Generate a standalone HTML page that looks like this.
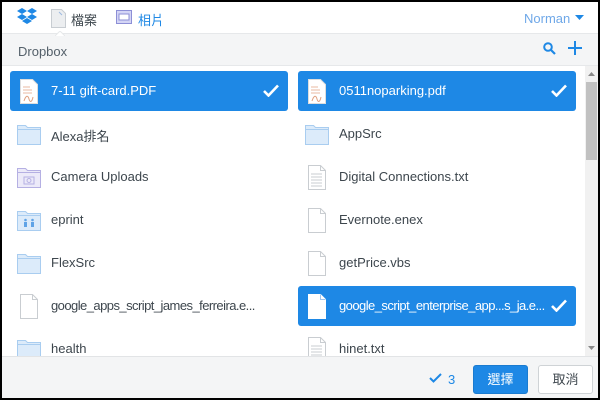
<!DOCTYPE html>
<html><head><meta charset="utf-8"><style>
*{margin:0;padding:0;box-sizing:border-box}
body{width:600px;height:400px;background:#000;overflow:hidden;font-family:"Liberation Sans","Noto Sans CJK TC",sans-serif;font-size:13px;color:#3d464d}
#w{position:absolute;left:2px;top:2px;width:596px;height:396px;background:#fff;overflow:hidden}
.a{position:absolute}
.row{position:absolute;height:40px;width:278px;border-radius:3px}
.row.sel{background:#1e88e5;color:#fff}
.row .t{position:absolute;left:41px;top:12px;white-space:nowrap}
.row .ic{position:absolute;left:7px;top:8px}
.chk{position:absolute;right:9px;top:13px}
.n{letter-spacing:-0.55px}
</style></head><body><div id="w">
<!-- top bar -->
<svg class="a" style="left:14px;top:5px" width="22" height="19" viewBox="0 0 22 19"><g fill="#1e88e5"><path d="M6 1l5 3-5 3-5-3z"/><path d="M16 1l5 3-5 3-5-3z"/><path d="M1 10l5-3 5 3-5 3z"/><path d="M11 10l5-3 5 3-5 3z"/><path d="M6 14l5-3 5 3-5 3z"/></g></svg>
<svg class="a" style="left:49px;top:7px" width="15" height="19"><path d="M.5 .5h10l4 4v14H.5z" fill="#eceef0" stroke="#c8cdd2"/><path d="M8 3l3 3" stroke="#9db9e0"/></svg>
<div class="a" style="left:69px;top:8px;font-size:13px;color:#3d464d">檔案</div>
<svg class="a" style="left:114px;top:8px" width="16" height="14"><rect x=".5" y=".5" width="15" height="13" fill="#d4d5f5" stroke="#8d8fd6"/><rect x="3" y="4" width="10" height="6" fill="#fff" stroke="#8d8fd6"/></svg>
<div class="a" style="left:136px;top:8px;color:#1e88e5">相片</div>
<div class="a" style="left:522px;top:9px;color:#6fa8e8">Norman</div>
<svg class="a" style="left:573px;top:13px" width="9" height="6"><path d="M0 0h9L4.5 5z" fill="#1e88e5"/></svg>
<!-- header -->
<div class="a" style="left:0;top:31px;width:596px;height:33px;background:#f4f5f6;border-top:1px solid #e6e8ea;border-bottom:1px solid #e6e8ea"></div>
<svg class="a" style="left:53px;top:29px" width="10" height="5"><path d="M0 5l5-5 5 5" fill="#fff" stroke="#e6e8ea"/></svg>
<div class="a" style="left:16px;top:42px;color:#54606a">Dropbox</div>
<svg class="a" style="left:541px;top:40px" width="13" height="13"><circle cx="5" cy="5" r="3.8" fill="none" stroke="#1e88e5" stroke-width="2"/><path d="M8 8l4 4" stroke="#1e88e5" stroke-width="2.2"/></svg>
<svg class="a" style="left:566px;top:39px" width="14" height="14"><path d="M7 0v14M0 7h14" stroke="#1e88e5" stroke-width="2"/></svg>
<!-- scrollbar -->
<div class="a" style="left:583px;top:64px;width:13px;height:290px;background:#f1f1f1"></div>
<svg class="a" style="left:586px;top:70px" width="7" height="5"><path d="M0 4h7L3.5 0z" fill="#888"/></svg>
<div class="a" style="left:584px;top:80px;width:11px;height:78px;background:#c1c1c1"></div>
<svg class="a" style="left:586px;top:344px" width="7" height="5"><path d="M0 0h7L3.5 4z" fill="#888"/></svg>

<svg width="0" height="0" style="position:absolute"><defs>
<g id="fold"><path d="M.5 3.5V1.5h8l2 2h13v17H.5z" fill="#dcebfa" stroke="#a9cdf0"/><path d="M.5 5.5h23" stroke="#a9cdf0"/></g>
<g id="file"><path d="M3.5 .5h12l5 5v19h-17z" fill="#fff" stroke="#c9cdd1"/><path d="M15.5 .5v5h5" fill="none" stroke="#c9cdd1"/></g>
<g id="txt"><use href="#file"/><path d="M6 9h11M6 12h11M6 15h11M6 18h11M6 21h11" stroke="#c9cdd1"/></g>
<g id="pdf"><path d="M3.5 .5h12l5 5v19h-17z" fill="#fff" stroke="#ddd"/><path d="M6 8h7M6 11h9M6 14h9" stroke="#e8b9a0"/><path d="M7 22c2-6 4-6 5-2s3 3 4-2" fill="none" stroke="#e0a080"/></g>
</defs></svg>

<div class="row sel" style="left:8px;top:69px"><svg class="ic" width="24" height="26"><use href="#pdf"/></svg><span class="t">7-11 gift-card.PDF</span><svg class="chk" width="16" height="13"><path d="M1 7l4.5 4.5L15 1.5" fill="none" stroke="#fff" stroke-width="2.6"/></svg></div>
<div class="row" style="left:8px;top:112px"><svg class="ic" style="top:10px" width="24" height="22"><use href="#fold"/></svg><span class="t">Alexa排名</span></div>
<div class="row" style="left:8px;top:155px"><svg class="ic" style="top:10px" width="24" height="22"><path d="M.5 3.5V1.5h8l2 2h13v17H.5z" fill="#eceaf9" stroke="#b5b0e3"/><path d="M.5 5.5h23" stroke="#b5b0e3"/><rect x="7" y="10" width="10" height="7" fill="none" stroke="#b5b0e3"/><circle cx="12" cy="13.5" r="2" fill="none" stroke="#b5b0e3"/></svg><span class="t">Camera Uploads</span></div>
<div class="row" style="left:8px;top:198px"><svg class="ic" style="top:10px" width="24" height="22"><use href="#fold"/><g fill="#5fa3e6"><circle cx="8.5" cy="10" r="1.3"/><rect x="7" y="12" width="3" height="5"/><circle cx="15.5" cy="10" r="1.3"/><rect x="14" y="12" width="3" height="5"/></g></svg><span class="t">eprint</span></div>
<div class="row" style="left:8px;top:241px"><svg class="ic" style="top:10px" width="24" height="22"><use href="#fold"/></svg><span class="t">FlexSrc</span></div>
<div class="row" style="left:8px;top:284px"><svg class="ic" width="24" height="26"><use href="#file"/></svg><span class="t n">google_apps_script_james_ferreira.e...</span></div>
<div class="row" style="left:8px;top:327px"><svg class="ic" style="top:10px" width="24" height="22"><use href="#fold"/></svg><span class="t">health</span></div>
<div class="row sel" style="left:296px;top:69px"><svg class="ic" width="24" height="26"><use href="#pdf"/></svg><span class="t">0511noparking.pdf</span><svg class="chk" width="16" height="13"><path d="M1 7l4.5 4.5L15 1.5" fill="none" stroke="#fff" stroke-width="2.6"/></svg></div>
<div class="row" style="left:296px;top:112px"><svg class="ic" style="top:10px" width="24" height="22"><use href="#fold"/></svg><span class="t">AppSrc</span></div>
<div class="row" style="left:296px;top:155px"><svg class="ic" width="24" height="26"><use href="#txt"/></svg><span class="t">Digital Connections.txt</span></div>
<div class="row" style="left:296px;top:198px"><svg class="ic" width="24" height="26"><use href="#file"/></svg><span class="t">Evernote.enex</span></div>
<div class="row" style="left:296px;top:241px"><svg class="ic" width="24" height="26"><use href="#file"/></svg><span class="t">getPrice.vbs</span></div>
<div class="row sel" style="left:296px;top:284px"><svg class="ic" width="24" height="26"><path d="M3.5 .5h12l5 5v19h-17z" fill="#fff" stroke="#fff"/><path d="M15.5 .5v5h5" fill="none" stroke="#9ec6f0"/></svg><span class="t n">google_script_enterprise_app...s_ja.e...</span><svg class="chk" width="16" height="13"><path d="M1 7l4.5 4.5L15 1.5" fill="none" stroke="#fff" stroke-width="2.6"/></svg></div>
<div class="row" style="left:296px;top:327px"><svg class="ic" width="24" height="26"><use href="#txt"/></svg><span class="t">hinet.txt</span></div>
<!-- footer -->
<div class="a" style="left:0;top:354px;width:596px;height:42px;background:#f4f5f6;border-top:1px solid #e2e4e6"></div>
<svg class="a" style="left:427px;top:371px" width="13" height="10"><path d="M1 5l3.5 3.5L12 1" fill="none" stroke="#1e88e5" stroke-width="2"/></svg>
<div class="a" style="left:446px;top:370px;color:#1e88e5">3</div>
<div class="a" style="left:471px;top:363px;width:55px;height:29px;background:#1e88e5;border:1px solid #1a7bd0;border-radius:3px;color:#fff;text-align:center;line-height:27px">選擇</div>
<div class="a" style="left:536px;top:363px;width:55px;height:29px;background:#fff;border:1px solid #cfd3d6;border-radius:3px;color:#3d464d;text-align:center;line-height:27px">取消</div>
</div></body></html>
